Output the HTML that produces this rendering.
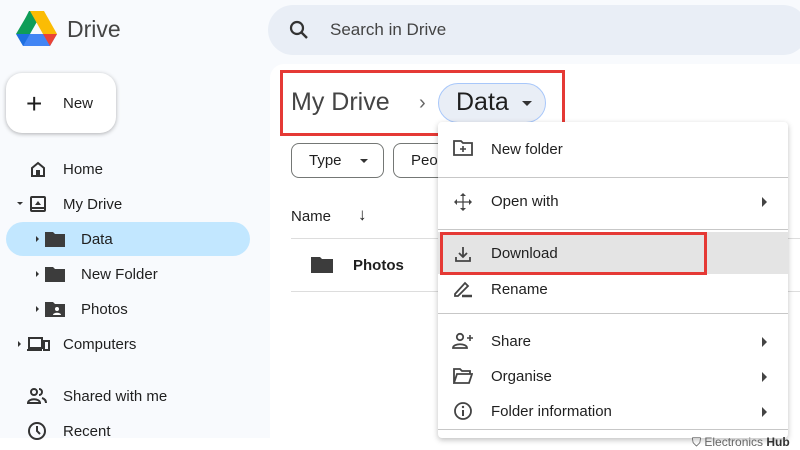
<!DOCTYPE html>
<html><head><style>
*{margin:0;padding:0;box-sizing:border-box}
body{width:800px;height:450px;overflow:hidden;background:#fff;font-family:"Liberation Sans",sans-serif;color:#1f1f1f;position:relative}
.bg{position:absolute;left:0;top:0;width:800px;height:438px;background:#f8fafd}
.main{position:absolute;left:270px;top:64px;width:530px;height:374px;background:#fff;border-radius:14px 0 0 0}
.abs{position:absolute}
.t{position:absolute;font-size:15px;color:#1f1f1f;white-space:nowrap}
.menu{position:absolute;left:438px;top:122px;width:350px;height:316px;background:#fff;box-shadow:0 2px 6px rgba(0,0,0,.25);border-radius:4px}
.sep{position:absolute;left:0;width:350px;height:1px;background:#c7c7c7}
.arr{position:absolute;left:324px;width:0;height:0;border-top:5px solid transparent;border-bottom:5px solid transparent;border-left:5px solid #444}
</style></head><body>
<div class="bg"></div>
<div class="main"></div>
<!-- logo -->
<svg class="abs" style="left:16px;top:11px" width="41" height="36" viewBox="0 0 41 36">
<polygon points="13,0 27,0 14,23 7,12" fill="#0f9d58"/>
<polygon points="14,0 28,0 41,23 27,23" fill="#fbbc04"/>
<polygon points="7,23 41,23 34,35 7,35" fill="#4285f4"/>
<polygon points="0,23 14,23 7,35" fill="#1e6fe0"/>
<polygon points="0,23 13,1 14,23" fill="#0f9d58"/>
<polygon points="34,35 41,23 27,23" fill="#ea4335"/>
</svg>
<div class="t" style="left:67px;top:16px;font-size:23px;color:#444">Drive</div>
<!-- search -->
<div class="abs" style="left:268px;top:5px;width:540px;height:50px;border-radius:25px;background:#e9eef6"></div>
<svg class="abs" style="left:289px;top:20px" width="20" height="20" viewBox="0 0 20 20"><circle cx="8" cy="8" r="6" fill="none" stroke="#333" stroke-width="2.2"/><line x1="12.5" y1="12.5" x2="18" y2="18" stroke="#333" stroke-width="2.4"/></svg>
<div class="t" style="left:330px;top:20px;font-size:17px;color:#444">Search in Drive</div>
<!-- new -->
<div class="abs" style="left:6px;top:73px;width:110px;height:60px;background:#fff;border-radius:16px;box-shadow:0 1px 4px rgba(0,0,0,.3)"></div>
<div class="t" style="left:26px;top:88px;font-size:28px;font-weight:300">+</div>
<div class="t" style="left:63px;top:95px;font-size:15px">New</div>
<!-- sidebar -->
<div class="abs" style="left:6px;top:222px;width:244px;height:34px;border-radius:17px;background:#c2e7ff"></div>
<svg class="abs" style="left:29px;top:160px" width="18" height="18" viewBox="0 0 18 18"><path d="M3 8L9 3l6 5v8H3z" fill="none" stroke="#333" stroke-width="2"/><rect x="7" y="10" width="4" height="6" fill="#333"/></svg>
<div class="t" style="left:63px;top:161px">Home</div>
<div class="abs" style="left:17px;top:202px;border-left:3px solid transparent;border-right:3px solid transparent;border-top:3px solid #333"></div>
<svg class="abs" style="left:29px;top:195px" width="18" height="18" viewBox="0 0 18 18"><rect x="2" y="2" width="14" height="14" rx="1" fill="none" stroke="#333" stroke-width="2"/><path d="M6 10l3-4 3 4z" fill="#333"/><line x1="2" y1="13" x2="16" y2="13" stroke="#333" stroke-width="2"/></svg>
<div class="t" style="left:63px;top:196px">My Drive</div>
<div class="abs" style="left:36px;top:236px;border-top:3px solid transparent;border-bottom:3px solid transparent;border-left:3px solid #333"></div>
<svg class="abs" style="left:45px;top:231px" width="20" height="16" viewBox="0 0 20 16"><path d="M0 1h8l2 2h10v13H0z" fill="#3c3c3c"/></svg>
<div class="t" style="left:81px;top:231px">Data</div>
<div class="abs" style="left:36px;top:271px;border-top:3px solid transparent;border-bottom:3px solid transparent;border-left:3px solid #333"></div>
<svg class="abs" style="left:45px;top:266px" width="20" height="16" viewBox="0 0 20 16"><path d="M0 1h8l2 2h10v13H0z" fill="#3c3c3c"/></svg>
<div class="t" style="left:81px;top:266px">New Folder</div>
<div class="abs" style="left:36px;top:306px;border-top:3px solid transparent;border-bottom:3px solid transparent;border-left:3px solid #333"></div>
<svg class="abs" style="left:45px;top:301px" width="20" height="16" viewBox="0 0 20 16"><path d="M0 1h8l2 2h10v13H0z" fill="#3c3c3c"/><circle cx="12" cy="8" r="2" fill="#fff"/><path d="M8 14c0-3 8-3 8 0z" fill="#fff"/></svg>
<div class="t" style="left:81px;top:301px">Photos</div>
<div class="abs" style="left:18px;top:341px;border-top:3px solid transparent;border-bottom:3px solid transparent;border-left:3px solid #333"></div>
<svg class="abs" style="left:26px;top:336px" width="24" height="16" viewBox="0 0 24 16"><path d="M3 2h13v10H3zM1 14h15" fill="none" stroke="#333" stroke-width="2"/><rect x="18" y="5" width="5" height="9" fill="none" stroke="#333" stroke-width="2"/></svg>
<div class="t" style="left:63px;top:336px">Computers</div>
<svg class="abs" style="left:27px;top:387px" width="20" height="18" viewBox="0 0 20 18"><circle cx="7" cy="5" r="3" fill="none" stroke="#333" stroke-width="2"/><path d="M1 16c0-5 12-5 12 0z" fill="none" stroke="#333" stroke-width="2"/><path d="M12 2a3 3 0 010 6M15 11c3 1 4 3 4 5" fill="none" stroke="#333" stroke-width="2"/></svg>
<div class="t" style="left:63px;top:388px">Shared with me</div>
<svg class="abs" style="left:27px;top:421px" width="20" height="20" viewBox="0 0 20 20"><circle cx="10" cy="10" r="8" fill="none" stroke="#333" stroke-width="2"/><path d="M10 5v5l3 3" fill="none" stroke="#333" stroke-width="2"/></svg>
<div class="t" style="left:63px;top:423px">Recent</div>
<!-- breadcrumb -->
<div class="t" style="left:291px;top:88px;font-size:25px;color:#444">My Drive</div>
<div class="t" style="left:419px;top:92px;font-size:20px;color:#666">›</div>
<div class="abs" style="left:438px;top:83px;width:108px;height:40px;border-radius:20px;background:#e9eef6;border:1px solid #a8c7fa"></div>
<div class="t" style="left:456px;top:88px;font-size:25px">Data</div>
<div class="abs" style="left:522px;top:101px;border-left:5px solid transparent;border-right:5px solid transparent;border-top:5px solid #333"></div>
<div class="abs" style="left:280px;top:70px;width:285px;height:66px;border:3px solid #e53935"></div>
<!-- filters -->
<div class="abs" style="left:291px;top:143px;width:93px;height:35px;border:1px solid #747775;border-radius:8px"></div>
<div class="t" style="left:309px;top:152px">Type</div>
<div class="abs" style="left:360px;top:159px;border-left:4px solid transparent;border-right:4px solid transparent;border-top:4px solid #333"></div>
<div class="abs" style="left:393px;top:143px;width:60px;height:35px;border:1px solid #747775;border-radius:8px"></div>
<div class="t" style="left:411px;top:152px">Peo</div>
<div class="t" style="left:291px;top:208px">Name</div>
<div class="t" style="left:358px;top:205px;font-size:17px">↓</div>
<div class="abs" style="left:291px;top:238px;width:509px;height:1px;background:#ddd"></div>
<svg class="abs" style="left:311px;top:256px" width="22" height="17" viewBox="0 0 22 17"><path d="M0 1h9l2 2h11v14H0z" fill="#3c3c3c"/></svg>
<div class="t" style="left:353px;top:257px;font-weight:bold;font-weight:600">Photos</div>
<div class="abs" style="left:291px;top:291px;width:509px;height:1px;background:#ddd"></div>
<!-- menu -->
<div class="menu">
<div class="abs" style="left:0;top:110px;width:350px;height:42px;background:#e4e4e4"></div>
<div class="sep" style="top:55px"></div>
<div class="sep" style="top:107px"></div>
<div class="sep" style="top:191px"></div>
<div class="sep" style="top:307px"></div>
<svg class="abs" style="left:15px;top:18px" width="20" height="16" viewBox="0 0 20 16"><path d="M1 1h7l2 2h9v12H1z" fill="none" stroke="#444" stroke-width="1.8"/><path d="M10 6v6M7 9h6" stroke="#444" stroke-width="1.6"/></svg>
<div class="t" style="left:53px;top:19px">New folder</div>
<svg class="abs" style="left:15px;top:70px" width="20" height="20" viewBox="0 0 20 20"><path d="M10 1l3 3h-6zM10 19l3-3h-6zM1 10l3-3v6zM19 10l-3-3v6z" fill="#444"/><path d="M10 4v12M4 10h12" stroke="#444" stroke-width="1.2"/></svg>
<div class="t" style="left:53px;top:71px">Open with</div>
<div class="arr" style="top:75px"></div>
<svg class="abs" style="left:16px;top:123px" width="18" height="18" viewBox="0 0 18 18"><path d="M9 2v10M5 8l4 4 4-4M2 12v4h14v-4" fill="none" stroke="#444" stroke-width="1.8"/></svg>
<div class="t" style="left:53px;top:123px">Download</div>
<svg class="abs" style="left:15px;top:158px" width="20" height="18" viewBox="0 0 20 18"><path d="M2 14L12 3l3 3L5 16H2z" fill="none" stroke="#444" stroke-width="1.8"/><path d="M9 16h10" stroke="#444" stroke-width="2.5"/></svg>
<div class="t" style="left:53px;top:159px">Rename</div>
<svg class="abs" style="left:14px;top:210px" width="22" height="18" viewBox="0 0 22 18"><circle cx="8" cy="5" r="3.2" fill="none" stroke="#444" stroke-width="1.8"/><path d="M1 16c0-5 14-5 14 0z" fill="none" stroke="#444" stroke-width="1.8"/><path d="M18 3v6M15 6h6" stroke="#444" stroke-width="1.6"/></svg>
<div class="t" style="left:53px;top:211px">Share</div>
<div class="arr" style="top:215px"></div>
<svg class="abs" style="left:15px;top:246px" width="20" height="16" viewBox="0 0 20 16"><path d="M1 15V1h6l2 2h8v3M1 15l3-9h15l-3 9z" fill="none" stroke="#444" stroke-width="1.8"/></svg>
<div class="t" style="left:53px;top:246px">Organise</div>
<div class="arr" style="top:250px"></div>
<svg class="abs" style="left:15px;top:279px" width="20" height="20" viewBox="0 0 20 20"><circle cx="10" cy="10" r="8" fill="none" stroke="#444" stroke-width="1.8"/><path d="M10 9v6" stroke="#444" stroke-width="2"/><circle cx="10" cy="6" r="1.2" fill="#444"/></svg>
<div class="t" style="left:53px;top:281px">Folder information</div>
<div class="arr" style="top:285px"></div>
</div>
<div class="abs" style="left:440px;top:232px;width:267px;height:43px;border:3px solid #e53935"></div>
<div class="t" style="left:692px;top:435px;font-size:12px;color:#666"><span style="color:#333">⛉</span> Electronics <b style="color:#333">Hub</b></div>
</body></html>
